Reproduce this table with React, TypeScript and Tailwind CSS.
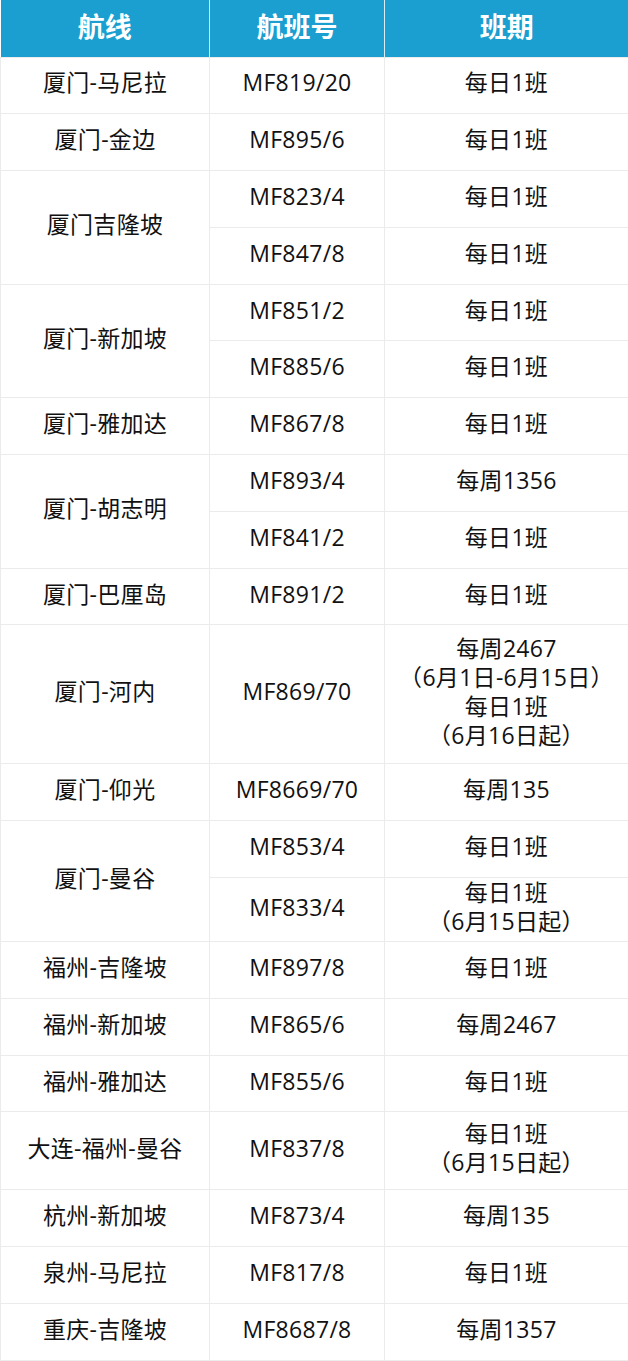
import React from "react";

type Flight = {
  flight: string;
  sched: string[];
  h: string;
};

type Group = {
  route: string;
  rows: Flight[];
};

const ROW = "h-[56.8px]";

const groups: Group[] = [
  { route: "厦门-马尼拉", rows: [{ flight: "MF819/20", sched: ["每日1班"], h: ROW }] },
  { route: "厦门-金边", rows: [{ flight: "MF895/6", sched: ["每日1班"], h: ROW }] },
  {
    route: "厦门吉隆坡",
    rows: [
      { flight: "MF823/4", sched: ["每日1班"], h: ROW },
      { flight: "MF847/8", sched: ["每日1班"], h: ROW },
    ],
  },
  {
    route: "厦门-新加坡",
    rows: [
      { flight: "MF851/2", sched: ["每日1班"], h: ROW },
      { flight: "MF885/6", sched: ["每日1班"], h: ROW },
    ],
  },
  { route: "厦门-雅加达", rows: [{ flight: "MF867/8", sched: ["每日1班"], h: ROW }] },
  {
    route: "厦门-胡志明",
    rows: [
      { flight: "MF893/4", sched: ["每周1356"], h: ROW },
      { flight: "MF841/2", sched: ["每日1班"], h: ROW },
    ],
  },
  { route: "厦门-巴厘岛", rows: [{ flight: "MF891/2", sched: ["每日1班"], h: ROW }] },
  {
    route: "厦门-河内",
    rows: [
      {
        flight: "MF869/70",
        sched: ["每周2467", "（6月1日-6月15日）", "每日1班", "（6月16日起）"],
        h: "h-[139px]",
      },
    ],
  },
  { route: "厦门-仰光", rows: [{ flight: "MF8669/70", sched: ["每周135"], h: ROW }] },
  {
    route: "厦门-曼谷",
    rows: [
      { flight: "MF853/4", sched: ["每日1班"], h: ROW },
      { flight: "MF833/4", sched: ["每日1班", "（6月15日起）"], h: "h-[64px]" },
    ],
  },
  { route: "福州-吉隆坡", rows: [{ flight: "MF897/8", sched: ["每日1班"], h: ROW }] },
  { route: "福州-新加坡", rows: [{ flight: "MF865/6", sched: ["每周2467"], h: ROW }] },
  { route: "福州-雅加达", rows: [{ flight: "MF855/6", sched: ["每日1班"], h: ROW }] },
  {
    route: "大连-福州-曼谷",
    rows: [{ flight: "MF837/8", sched: ["每日1班", "（6月15日起）"], h: "h-[78px]" }],
  },
  { route: "杭州-新加坡", rows: [{ flight: "MF873/4", sched: ["每周135"], h: ROW }] },
  { route: "泉州-马尼拉", rows: [{ flight: "MF817/8", sched: ["每日1班"], h: ROW }] },
  { route: "重庆-吉隆坡", rows: [{ flight: "MF8687/8", sched: ["每周1357"], h: ROW }] },
];

// cells sit a touch high in the original, hence the bottom padding
const cell = "border border-[#ebebeb] text-center align-middle px-0 pt-0 pb-[5px]";

export default function App() {
  return (
    <div className="w-[628px] bg-white font-['Open_Sans','Noto_Sans_CJK_SC',sans-serif] text-[#111111]">
      <table className="w-[628px] table-fixed border-collapse">
        <colgroup>
          <col className="w-[209px]" />
          <col className="w-[175px]" />
          <col className="w-[244px]" />
        </colgroup>
        <thead>
          <tr className="h-[57px] bg-[#1a9fd0] text-white text-[27px] font-bold">
            <th className="border-r border-r-[#d6eef8] align-middle pb-[4px] font-['Noto_Sans_CJK_SC',sans-serif]">航线</th>
            <th className="border-r border-r-[#d6eef8] align-middle pb-[4px] font-['Noto_Sans_CJK_SC',sans-serif]">航班号</th>
            <th className="align-middle pb-[4px] font-['Noto_Sans_CJK_SC',sans-serif]">班期</th>
          </tr>
        </thead>
        <tbody className="text-[23px] leading-[29px] tracking-[0.3px]">
          {groups.map((g) =>
            g.rows.map((r, i) => (
              <tr key={g.route + r.flight} className={r.h}>
                {i === 0 && (
                  <td rowSpan={g.rows.length} className={cell}>
                    {g.route}
                  </td>
                )}
                <td className={cell}>{r.flight}</td>
                <td className={cell}>
                  {r.sched.map((s) => (
                    <div key={s}>{s}</div>
                  ))}
                </td>
              </tr>
            ))
          )}
        </tbody>
      </table>
    </div>
  );
}
